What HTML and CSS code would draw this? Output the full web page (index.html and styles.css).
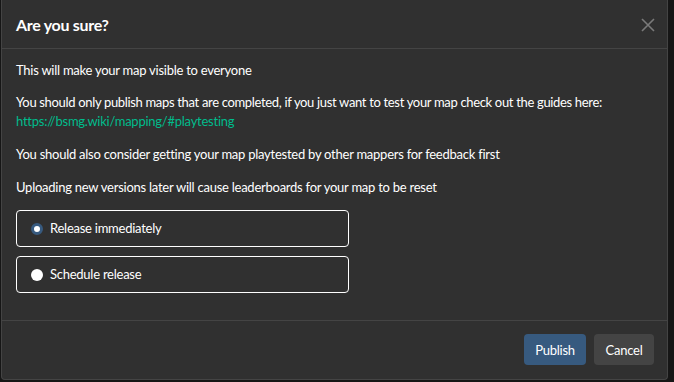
FILE: index.html
```html
<!DOCTYPE html>
<html>
<head>
<meta charset="utf-8">
<link rel="stylesheet" href="styles.css">
</head>
<body>
<div class="page">
  <div class="modal">
    <div class="modal-header">
      <h5 class="modal-title">Are you sure?</h5>
      <button class="close" aria-label="Close">
        <svg width="14" height="14" viewBox="0 0 14 14"><path d="M1 1L13 13M13 1L1 13" stroke="#7a7a7a" stroke-width="1.6" fill="none"/></svg>
      </button>
    </div>
    <div class="modal-body">
      <p>This will make your map visible to everyone</p>
      <p><span class="tight">You should only publish maps that are completed, if you just want to test your map check out the guides here:</span><br><a href="#">https://bsmg.wiki/mapping/#playtesting</a></p>
      <p>You should also consider getting your map playtested by other mappers for feedback first</p>
      <p>Uploading new versions later will cause leaderboards for your map to be reset</p>
      <div class="options">
        <label class="option"><span class="radio checked"></span>Release immediately</label>
        <label class="option"><span class="radio"></span>Schedule release</label>
      </div>
    </div>
    <div class="modal-footer">
      <button class="btn btn-primary">Publish</button>
      <button class="btn btn-secondary">Cancel</button>
    </div>
  </div>
</div>
</body>
</html>
```
FILE: styles.css
```css
html, body {
  margin: 0;
  padding: 0;
  background: #161616;
  font-family: Lato, "Open Sans", sans-serif;
  color: #fff;
}
.page {
  width: 674px;
  height: 382px;
  overflow: hidden;
  padding-left: 1px;
  box-sizing: border-box;
}
.modal {
  width: 667px;
  box-sizing: border-box;
  background: #303030;
  border: 1px solid #444;
  border-top: none;
  border-radius: 0 0 4px 4px;
}
.modal-header {
  height: 48px;
  border-bottom: 1px solid #444;
  display: flex;
  align-items: center;
  justify-content: space-between;
  padding: 0 12px 0 14px;
}
.modal-title {
  margin: 0;
  font-size: 16px;
  font-weight: 700;
  letter-spacing: -0.3px;
  line-height: 20px;
  padding-top: 1px;
}
.close {
  background: none;
  border: none;
  padding: 0;
  width: 14px;
  height: 14px;
  display: flex;
  align-items: center;
  justify-content: center;
  margin-top: 1px;
}
.modal-body {
  padding: 12px 14px 16px 14px;
  height: 271px;
  box-sizing: border-box;
  font-size: 13px;
  letter-spacing: -0.25px;
  line-height: 19px;
}
.modal-body p {
  margin: 0 0 13px 0;
}
.modal-body p:nth-child(2),
.modal-body p:nth-child(3) {
  margin-bottom: 14px;
}
.tight {
  letter-spacing: -0.33px;
}
.modal-body a {
  color: #00bc8c;
  text-decoration: none;
}
.options {
  display: flex;
  flex-direction: column;
  gap: 9px;
  padding-top: 0;
}
.option {
  width: 333px;
  height: 37px;
  box-sizing: border-box;
  border: 1px solid #fff;
  border-radius: 4px;
  display: flex;
  align-items: center;
  padding-left: 14px;
  gap: 7px;
}
.radio {
  width: 12px;
  height: 12px;
  border-radius: 50%;
  background: #fff;
  box-sizing: border-box;
  flex: none;
}
.radio.checked {
  background: #fff;
  border: 3px solid #375a7f;
}
.modal-footer {
  border-top: 1px solid #444;
  padding: 13px 13px 14px 0;
  display: flex;
  justify-content: flex-end;
  gap: 8px;
}
.btn {
  font-family: Lato, sans-serif;
  font-size: 13px;
  letter-spacing: -0.25px;
  color: #fff;
  border: none;
  border-radius: 4px;
  height: 31px;
  padding: 0 11px;
}
.btn-primary {
  background: #375a7f;
  width: 62px;
}
.btn-secondary {
  background: #444;
  width: 60px;
}
```
